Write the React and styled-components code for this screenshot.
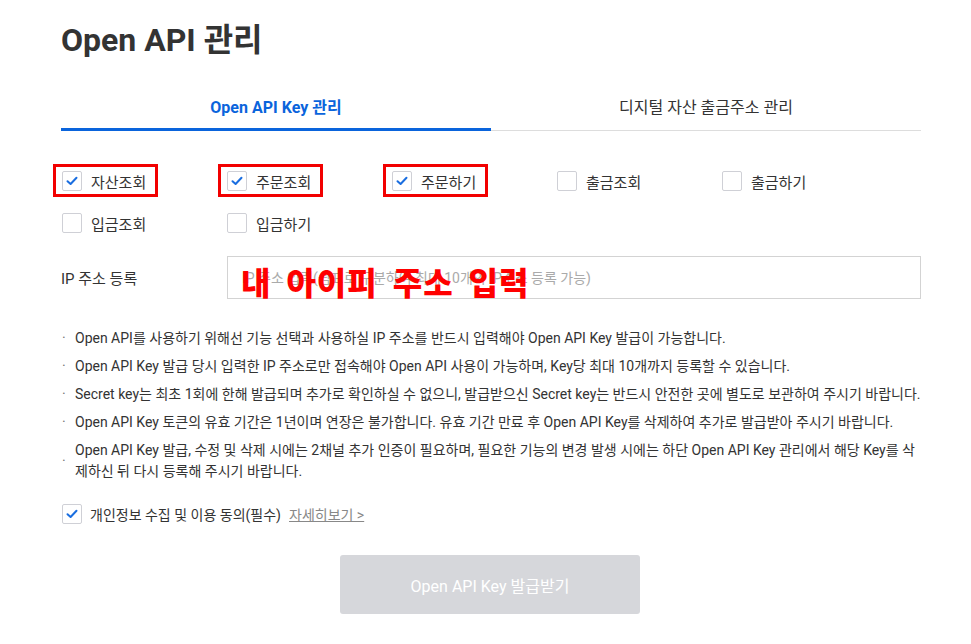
import React from 'react'
import styled, { createGlobalStyle, css } from 'styled-components'

const GlobalStyle = createGlobalStyle`
  body {
    margin: 0;
    background: #fff;
    font-family: Roboto, "Noto Sans CJK KR", "Noto Sans", sans-serif;
    color: #333;
  }
`

const Page = styled.div`
  width: 860px;
  padding: 17px 0 0 61px;
`

const Title = styled.h1`
  margin: 0;
  font-size: 32px;
  font-weight: 700;
  line-height: 46px;
  color: #333;
`

const Tabs = styled.div`
  display: flex;
  margin-top: 35px;
  border-bottom: 1px solid #ddd;
`

const Tab = styled.div`
  flex: 1;
  text-align: center;
  font-size: 16px;
  line-height: 20px;
  padding-bottom: 10px;
  color: #333;
  margin-bottom: -1px;
  border-bottom: 3px solid transparent;
  ${props => props.active && css`
    color: #0a64dc;
    font-weight: 700;
    border-bottom-color: #0a64dc;
  `}
`

const Grid = styled.div`
  display: grid;
  grid-template-columns: repeat(5, 165px);
  row-gap: 22px;
  margin-top: 40px;
`

const Item = styled.label`
  position: relative;
  display: flex;
  align-items: center;
  gap: 9px;
  font-size: 15px;
  color: #333;
  height: 20px;
  justify-self: start;
  padding-left: 1px;
  ${props => props.highlight && css`
    &::before {
      content: '';
      position: absolute;
      top: -7px;
      bottom: -6px;
      left: -8px;
      right: -12px;
      border: 3px solid #f20000;
    }
  `}
`

const Box = styled.span`
  width: 18px;
  height: 18px;
  border: 1px solid #cfd0d6;
  border-radius: 2px;
  background: #fff;
  display: flex;
  align-items: center;
  justify-content: center;
  flex-shrink: 0;
`

const Check = ({ checked }) => (
  <Box>
    {checked && (
      <svg width="12" height="10" viewBox="0 0 12 10">
        <path d="M1.5 5.2 L4.6 8 L10.5 1.8" fill="none" stroke="#1a6ee0" strokeWidth="2" strokeLinecap="round" strokeLinejoin="round" />
      </svg>
    )}
  </Box>
)

const IpRow = styled.div`
  display: grid;
  grid-template-columns: 166px 1fr;
  align-items: center;
  margin-top: 23px;
`

const IpLabel = styled.div`
  font-size: 15px;
  color: #333;
`

const InputWrap = styled.div`
  position: relative;
`

const Input = styled.input`
  box-sizing: border-box;
  width: 100%;
  height: 43px;
  border: 1px solid #d3d3d3;
  padding: 0 14px;
  font-family: inherit;
  font-size: 14px;
  outline: none;
  &::placeholder {
    color: #aaa;
  }
`

const Overlay = styled.span`
  position: absolute;
  left: 14px;
  top: 2px;
  font-size: 32px;
  font-weight: 900;
  color: #ff0000;
  letter-spacing: 1px;
  word-spacing: 6px;
  pointer-events: none;
`

const Notes = styled.ul`
  list-style: none;
  padding: 0;
  margin: 29px 0 0;
`

const Note = styled.li`
  display: flex;
  align-items: center;
  font-size: 14px;
  line-height: 21px;
  color: #333;
  margin-bottom: 7px;
`

const Dot = styled.span`
  width: 13px;
  flex-shrink: 0;
  color: #777;
  padding-left: 1px;
`

const Agree = styled.div`
  display: flex;
  align-items: center;
  gap: 8px;
  margin-top: 22px;
  font-size: 14px;
  padding-left: 1px;
`

const More = styled.a`
  color: #888;
  text-decoration: underline;
`

const Submit = styled.button`
  display: block;
  margin: 31px auto 0;
  width: 300px;
  height: 59px;
  border: none;
  border-radius: 3px;
  background: #d6d7db;
  color: #fff;
  font-family: inherit;
  font-size: 16px;
  position: relative;
  left: -1px;
`

const perms = [
  { label: '자산조회', checked: true },
  { label: '주문조회', checked: true },
  { label: '주문하기', checked: true },
  { label: '출금조회' },
  { label: '출금하기' },
  { label: '입금조회' },
  { label: '입금하기' },
]

const notes = [
  'Open API를 사용하기 위해선 기능 선택과 사용하실 IP 주소를 반드시 입력해야 Open API Key 발급이 가능합니다.',
  'Open API Key 발급 당시 입력한 IP 주소로만 접속해야 Open API 사용이 가능하며, Key당 최대 10개까지 등록할 수 있습니다.',
  'Secret key는 최초 1회에 한해 발급되며 추가로 확인하실 수 없으니, 발급받으신 Secret key는 반드시 안전한 곳에 별도로 보관하여 주시기 바랍니다.',
  'Open API Key 토큰의 유효 기간은 1년이며 연장은 불가합니다. 유효 기간 만료 후 Open API Key를 삭제하여 추가로 발급받아 주시기 바랍니다.',
  'Open API Key 발급, 수정 및 삭제 시에는 2채널 추가 인증이 필요하며, 필요한 기능의 변경 발생 시에는 하단 Open API Key 관리에서 해당 Key를 삭제하신 뒤 다시 등록해 주시기 바랍니다.',
]

const App = () => (
  <Page>
    <GlobalStyle />
    <Title>Open API 관리</Title>
    <Tabs>
      <Tab active>Open API Key 관리</Tab>
      <Tab>디지털 자산 출금주소 관리</Tab>
    </Tabs>
    <Grid>
      {perms.map(p => (
        <Item key={p.label} highlight={p.checked}>
          <Check checked={p.checked} />
          {p.label}
        </Item>
      ))}
    </Grid>
    <IpRow>
      <IpLabel>IP 주소 등록</IpLabel>
      <InputWrap>
        <Input placeholder="IP 주소 입력(쉼표로 구분하여 최대 10개의 IP주소 등록 가능)" />
        <Overlay>내 아이피 주소 입력</Overlay>
      </InputWrap>
    </IpRow>
    <Notes>
      {notes.map(n => (
        <Note key={n}>
          <Dot>·</Dot>
          <span>{n}</span>
        </Note>
      ))}
    </Notes>
    <Agree>
      <Check checked />
      <span>개인정보 수집 및 이용 동의(필수)</span>
      <More>자세히보기 &gt;</More>
    </Agree>
    <Submit>Open API Key 발급받기</Submit>
  </Page>
)

export default App
